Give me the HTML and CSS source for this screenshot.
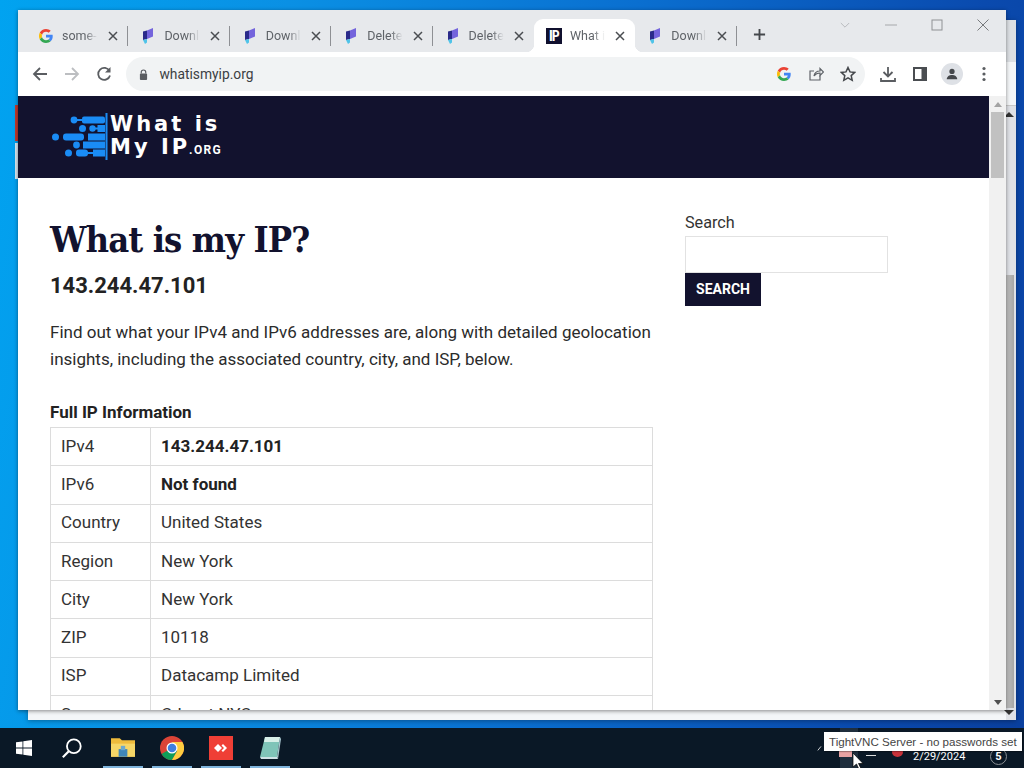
FILE: index.html
```html
<!DOCTYPE html>
<html lang="en">
<head>
<meta charset="utf-8">
<title>What is my IP?</title>
<link rel="stylesheet" href="styles.css">
</head>
<body>
<svg class="defs" width="0" height="0" aria-hidden="true">
  <defs>
    <symbol id="ic-g" viewBox="0 0 48 48">
      <path fill="#ea4335" d="M24 9.500c3.500 0 6.700 1.200 9.200 3.600l6.900-6.900C35.900 2.400 30.500 0 24 0 14.600 0 6.500 5.400 2.600 13.200l8 6.200C12.400 13.700 17.700 9.500 24 9.500z"/>
      <path fill="#4285f4" d="M47 24.500c0-1.600-.1-3.100-.4-4.500H24v9h13c-.6 3-2.300 5.500-4.800 7.200l7.700 6C44.400 37.900 47 31.800 47 24.500z"/>
      <path fill="#fbbc05" d="M10.500 28.600c-.5-1.400-.8-3-.8-4.600s.3-3.200.8-4.600l-8-6.200C.9 16.500 0 20.100 0 24s.9 7.500 2.600 10.800l7.900-6.200z"/>
      <path fill="#34a853" d="M24 48c6.500 0 11.900-2.100 15.900-5.800l-7.700-6c-2.200 1.400-4.900 2.300-8.200 2.300-6.300 0-11.600-4.200-13.500-9.900l-8 6.200C6.500 42.600 14.600 48 24 48z"/>
    </symbol>
    <symbol id="ic-doc" viewBox="0 0 12 16">
      <path fill="#7464dc" d="M5 2.500 11 0v8.500L5 11z"/>
      <path fill="#2a2a8a" d="M1 3.500 5 2.500V11l-4 1z"/>
      <path fill="#4fc3e8" d="M1 12l4-1v3.500L3 16z"/>
    </symbol>
    <symbol id="ic-x" viewBox="0 0 10 10">
      <path d="M1 1l8 8M9 1l-8 8" fill="none" stroke="#4a4d51" stroke-width="1.500"/>
    </symbol>
  </defs>
</svg>

<div class="desktop">
  <div class="peek"></div>
  <div class="back-window">
    <div class="back-strip"></div>
    <div class="back-bar"><span class="back-up"></span><span class="back-thumb"></span><span class="back-down"></span></div>
  </div>

  <div class="window">
    <div class="tabstrip">
      <div class="tab sep"><svg class="fav g"><use href="#ic-g"/></svg><span class="tab-title">some-s</span><svg class="tab-x"><use href="#ic-x"/></svg></div>
      <div class="tab sep"><svg class="fav doc"><use href="#ic-doc"/></svg><span class="tab-title">Downlo</span><svg class="tab-x"><use href="#ic-x"/></svg></div>
      <div class="tab sep"><svg class="fav doc"><use href="#ic-doc"/></svg><span class="tab-title">Downlo</span><svg class="tab-x"><use href="#ic-x"/></svg></div>
      <div class="tab sep"><svg class="fav doc"><use href="#ic-doc"/></svg><span class="tab-title">Delete</span><svg class="tab-x"><use href="#ic-x"/></svg></div>
      <div class="tab"><svg class="fav doc"><use href="#ic-doc"/></svg><span class="tab-title">Delete</span><svg class="tab-x"><use href="#ic-x"/></svg></div>
      <div class="tab active"><span class="fav ip">IP</span><span class="tab-title">What is</span><svg class="tab-x"><use href="#ic-x"/></svg></div>
      <div class="tab sep"><svg class="fav doc"><use href="#ic-doc"/></svg><span class="tab-title">Downlo</span><svg class="tab-x"><use href="#ic-x"/></svg></div>
      <svg class="new-tab" viewBox="0 0 14 14"><path d="M7 1v12M1 7h12" fill="none" stroke="#45484c" stroke-width="2"/></svg>
      <div class="win-ctrls">
        <svg class="ctrl chev" viewBox="0 0 12 8"><path d="M1 1l5 5 5-5" fill="none" stroke="#b9bbbe" stroke-width="1.200"/></svg>
        <svg class="ctrl" viewBox="0 0 12 12"><path d="M0 6h12" stroke="#a6a8ab" stroke-width="1"/></svg>
        <svg class="ctrl" viewBox="0 0 12 12"><rect x="1" y="1" width="10" height="10" fill="none" stroke="#8f9194" stroke-width="1"/></svg>
        <svg class="ctrl" viewBox="0 0 12 12"><path d="M.5.5l11 11M11.500.5l-11 11" fill="none" stroke="#77797c" stroke-width="1"/></svg>
      </div>
    </div>

    <div class="toolbar">
      <svg class="tool back" viewBox="0 0 16 16"><path d="M15 8H2M8 2 2 8l6 6" fill="none" stroke="#5a5d61" stroke-width="1.800"/></svg>
      <svg class="tool forward" viewBox="0 0 16 16"><path d="M1 8h13M8 2l6 6-6 6" fill="none" stroke="#bcbec1" stroke-width="1.800"/></svg>
      <svg class="tool reload" viewBox="0 0 16 16"><path d="M13.500 5A6 6 0 1 0 14 9.500" fill="none" stroke="#5a5d61" stroke-width="1.800"/><path d="M14.500 1v5.500H9z" fill="#5a5d61"/></svg>
      <div class="omnibox">
        <svg class="lock" viewBox="0 0 10 12"><path d="M2.500 5V3.500a2.500 2.500 0 0 1 5 0V5" fill="none" stroke="#5a5d61" stroke-width="1.300"/><rect x="1" y="5" width="8" height="7" rx="1" fill="#5a5d61"/></svg>
        <span class="url">whatismyip.org</span>
        <span class="omni-icons">
          <svg class="omni-g"><use href="#ic-g"/></svg>
          <svg class="omni-ic" viewBox="0 0 16 16"><path d="M12 9.500V14H2V5h4" fill="none" stroke="#5f6368" stroke-width="1.200"/><path d="M6 10c.5-3 3-5 6-5V2.500L15.500 6 12 9.500V7c-2.500 0-4.500 1-6 3z" fill="none" stroke="#5f6368" stroke-width="1.200"/></svg>
          <svg class="omni-ic" viewBox="0 0 16 16"><path d="M8 1.500l2 4.400 4.800.5-3.600 3.200 1 4.700L8 11.900l-4.200 2.400 1-4.700L1.200 6.400 6 5.900z" fill="none" stroke="#45484c" stroke-width="1.500"/></svg>
        </span>
      </div>
      <svg class="tool dl" viewBox="0 0 16 16"><path d="M8 1v9M3.500 6 8 10.500 12.500 6" fill="none" stroke="#5a5d61" stroke-width="1.800"/><path d="M1 12v3h14v-3" fill="none" stroke="#5a5d61" stroke-width="1.800"/></svg>
      <svg class="tool panel" viewBox="0 0 14 14"><path d="M0 0h14v14H0z" fill="#4a4d51"/><path d="M2 2h6.500v10H2z" fill="#fff"/></svg>
      <span class="avatar"><svg viewBox="0 0 16 16"><circle cx="8" cy="5" r="3" fill="#45484c"/><path d="M2 14c0-3.500 3-5 6-5s6 1.500 6 5z" fill="#45484c"/></svg></span>
      <svg class="tool kebab" viewBox="0 0 4 16"><circle cx="2" cy="2.500" r="1.600" fill="#5a5d61"/><circle cx="2" cy="8" r="1.600" fill="#5a5d61"/><circle cx="2" cy="13.500" r="1.600" fill="#5a5d61"/></svg>
    </div>

    <div class="viewport">
      <div class="page">
        <header class="site-head">
          <div class="logo">
            <svg class="logo-mark" viewBox="0 0 56 47">
              <g fill="#1a8cf5">
                <rect x="53.500" y="0" width="2" height="47"/>
                <circle cx="22" cy="7" r="3.400"/><rect x="24" y="6" width="6" height="2"/><rect x="30" y="3.500" width="23" height="7" rx="2"/>
                <circle cx="30.500" cy="15.500" r="3.500"/><circle cx="40.500" cy="15.500" r="3.200"/><rect x="43" y="14.500" width="3" height="2"/><rect x="45.500" y="12" width="7.500" height="7"/>
                <circle cx="3.500" cy="24" r="3.500"/><rect x="11" y="20.500" width="21" height="7" rx="3"/><rect x="36" y="20.500" width="17" height="7"/>
                <circle cx="24.500" cy="32" r="3.400"/><rect x="31" y="28.500" width="22" height="7"/>
                <circle cx="16.500" cy="40" r="3.500"/><rect x="24" y="36.500" width="12" height="7" rx="3"/><rect x="36" y="39" width="5" height="2"/><rect x="41" y="36.500" width="12" height="7"/>
              </g>
            </svg>
            <div class="logo-text">
              <span class="logo-line">What is</span>
              <span class="logo-line">My IP<small class="logo-org">.ORG</small></span>
            </div>
          </div>
        </header>
        <div class="page-body">
          <main class="main-col">
            <h1 class="title">What is my IP?</h1>
            <h2 class="ip-addr">143.244.47.101</h2>
            <p class="intro">Find out what your IPv4 and IPv6 addresses are, along with detailed geolocation insights, including the associated country, city, and ISP, below.</p>
            <h3 class="table-title">Full IP Information</h3>
            <table class="info">
              <tr><td class="key">IPv4</td><td><strong>143.244.47.101</strong></td></tr>
              <tr><td class="key">IPv6</td><td><strong>Not found</strong></td></tr>
              <tr><td class="key">Country</td><td>United States</td></tr>
              <tr><td class="key">Region</td><td>New York</td></tr>
              <tr><td class="key">City</td><td>New York</td></tr>
              <tr><td class="key">ZIP</td><td>10118</td></tr>
              <tr><td class="key">ISP</td><td>Datacamp Limited</td></tr>
              <tr><td class="key">Server</td><td>Cdnext NYC</td></tr>
            </table>
          </main>
          <aside class="side-col">
            <label class="search-label" for="q">Search</label>
            <input class="search-input" id="q" type="text">
            <button class="search-btn" type="button">SEARCH</button>
          </aside>
        </div>
      </div>
      <div class="scrollbar">
        <span class="sb-up"></span>
        <span class="sb-thumb"></span>
        <span class="sb-space"></span>
        <span class="sb-down"></span>
      </div>
    </div>
  </div>

  <div class="taskbar">
    <svg class="tb-start" viewBox="0 0 16 16"><path fill="#fff" d="M0 2.300 6.500 1.400v6.200H0zM7.300 1.300 16 0v7.600H7.300zM0 8.400h6.500v6.200L0 13.700zM7.300 8.400H16V16l-8.700-1.300z"/></svg>
    <svg class="tb-search" viewBox="0 0 24 24"><circle cx="14" cy="10" r="7.500" fill="none" stroke="#fff" stroke-width="2"/><path d="M8.500 15.500 2 22" stroke="#fff" stroke-width="2.400"/></svg>
    <span class="tb-app">
      <svg viewBox="0 0 22 20"><path d="M0 1h8l2 2h12v15H0z" fill="#eebb3c"/><path d="M0 6h22v12H0z" fill="#f6d667"/><path d="M7 11h8v7H7z" fill="#3f86b8"/><path d="M9 8h4v4H9z" fill="#6ba8cf"/></svg>
    </span>
    <span class="tb-app">
      <svg viewBox="0 0 24 24"><circle cx="12" cy="12" r="12" fill="#db4437"/><path d="M12 12 1.600 18A12 12 0 0 0 12 24l5.200-9z" fill="#0f9d58"/><path d="M12 6h10.400A12 12 0 0 1 12 24l5.200-9z" fill="#ffcd40"/><circle cx="12" cy="12" r="5.500" fill="#fff"/><circle cx="12" cy="12" r="4.300" fill="#3f7fe0"/></svg>
    </span>
    <span class="tb-app">
      <svg viewBox="0 0 24 24"><rect width="24" height="24" fill="#ef3f36"/><path d="M9 8l4 4-4 4-4-4z" fill="#fff"/><path d="M14 8l4 4-4 4-1.500-1.500 2.500-2.500-2.500-2.500z" fill="#fff"/></svg>
    </span>
    <span class="tb-app">
      <svg viewBox="0 0 22 24"><path d="M6 1h15l-3 20H1z" fill="#7fc4b8"/><path d="M6 1h15l-1 5H5z" fill="#d8efe8"/><path d="M1 21l17 0 1 2H2z" fill="#cfe2e6"/><path d="M18 21l3-20 1 2-3 20z" fill="#a9c6cf"/></svg>
    </span>
    <div class="tray">
      <svg class="tray-chev" viewBox="0 0 10 6"><path d="M1 6l4-5" fill="none" stroke="#fff" stroke-width="1"/></svg>
      <span class="tray-hover"></span>
      <span class="tray-red"></span>
      <span class="tray-net"></span>
      <span class="tray-x"></span>
      <span class="tray-date">2/29/2024</span>
      <span class="tray-note">5</span>
    </div>
  </div>

  <div class="tooltip">TightVNC Server - no passwords set</div>
  <svg class="cursor" viewBox="0 0 12 18"><path d="M1 1v14l3.500-3 2.500 5.500 2-1-2.500-5H11z" fill="#fff" stroke="#000" stroke-width=".7"/></svg>
</div>
</body>
</html>
```
FILE: styles.css
```css
* { box-sizing: border-box; }
html, body { margin: 0; height: 100%; overflow: hidden; }
body { font-family: Roboto, "Liberation Sans", sans-serif; }
.defs { position: absolute; }

.desktop {
  position: relative;
  width: 1024px;
  height: 768px;
  overflow: hidden;
  background: linear-gradient(100deg, #01a3f0 0%, #0a90e4 25%, #0a6fd0 55%, #0a4aae 85%, #0a3f9e 100%);
}

.peek { position: absolute; left: 15px; top: 105px; width: 3px; height: 36px; background: #c0392b; box-shadow: 0 38px 0 0 #d7e6ef; }

.back-window {
  position: absolute;
  left: 28px; top: 20px;
  width: 988px; height: 700px;
  background: #f4f6f8;
  box-shadow: 0 1px 5px rgba(0,0,0,.35);
  display: flex;
  justify-content: flex-end;
}
.back-strip { position: absolute; left: 0; right: 0; top: 0; height: 42px; background: #dcdfe3; }
.back-bar { position: relative; width: 10px; display: flex; flex-direction: column; margin-top: 85px; background: #dfe1e6; border-top: 1px solid #c8c8c8; }
.back-up { flex: none; width: 0; height: 0; margin: 6px 0 0 -2px; border-left: 5px solid transparent; border-right: 5px solid transparent; border-bottom: 5px solid #333; }
.back-thumb { flex: 1; margin-top: 158px; margin-right: 2px; background: linear-gradient(90deg, #c2c2c2, #a6a6a6); }
.back-down { flex: none; width: 0; height: 0; margin: 2px 0 5px -2px; border-left: 5px solid transparent; border-right: 5px solid transparent; border-top: 5px solid #333; }

.window {
  position: absolute;
  left: 18px; top: 10px;
  width: 988px; height: 700px;
  background: #fff;
  box-shadow: 0 1px 4px rgba(0,0,0,.45);
  display: flex;
  flex-direction: column;
}

.tabstrip {
  height: 42px;
  flex: none;
  background: #e7e9ec;
  display: flex;
  align-items: flex-end;
  padding-left: 9px;
  position: relative;
}
.tab {
  width: 101.400px;
  height: 33px;
  flex: none;
  display: flex;
  align-items: center;
  padding: 0 8px 0 10px;
  position: relative;
  font-size: 12.500px;
  color: #5f6368;
}
.tab.sep::after { content: ""; position: absolute; right: 0; top: 7px; height: 20px; width: 1px; background: #8e9094; }
.tab.active { background: #fff; border-radius: 9px 9px 0 0; }
.tab.active::before,
.tab.active::after { content: ""; position: absolute; bottom: 0; width: 8px; height: 8px; }
.tab.active::before { left: -8px; background: radial-gradient(circle at 0 0, transparent 8px, #fff 8.500px); }
.tab.active::after { right: -8px; background: radial-gradient(circle at 100% 0, transparent 8px, #fff 8.500px); }
.fav { width: 16px; height: 16px; flex: none; }
.fav.g { width: 14px; height: 14px; margin: 0 1px 0 2px; }
.fav.doc { width: 12px; height: 16px; margin: 0 2px 0 4px; }
.fav.ip { margin-left: 2px; background: #10102e; color: #fff; font: 700 14px/16px "Roboto Condensed", Roboto, sans-serif; text-align: center; letter-spacing: -.8px; }
.tab-title {
  flex: 1;
  min-width: 0;
  margin-left: 8px;
  white-space: nowrap;
  overflow: hidden;
  -webkit-mask-image: linear-gradient(90deg, #000 55%, transparent 85%);
  mask-image: linear-gradient(90deg, #000 55%, transparent 85%);
}
.tab-x { width: 10px; height: 10px; flex: none; margin-left: 4px; margin-right: 2px; }
.new-tab { width: 13px; height: 13px; margin: 0 0 11px 16px; flex: none; }

.win-ctrls { position: absolute; right: 0; top: 0; height: 30px; display: flex; }
.ctrl { width: 12px; height: 12px; margin: 9px 17px 0; flex: none; }
.ctrl.chev { width: 10px; height: 7px; margin: 12px 18px 0; }

.toolbar {
  height: 44px;
  flex: none;
  display: flex;
  align-items: center;
  background: #fff;
  padding-left: 14px;
  position: relative;
}
.tool { flex: none; width: 16px; height: 16px; }
.forward { margin-left: 16px; }
.reload { margin-left: 16px; }
.omnibox {
  width: 739px; height: 34px;
  margin-left: 14px;
  background: #f1f3f4;
  border-radius: 17px;
  display: flex;
  align-items: center;
  padding: 0 9px 0 13px;
  flex: none;
}
.lock { width: 9px; height: 11px; flex: none; }
.url { margin-left: 11.500px; font-size: 13.800px; color: #3c4043; }
.omni-icons { margin-left: auto; display: flex; align-items: center; gap: 16px; }
.omni-g { width: 14px; height: 14px; margin-right: 1px; }
.omni-ic { width: 16px; height: 16px; }
.dl { margin-left: 15px; }
.panel { width: 14px; height: 14px; margin-left: 17px; }
.avatar { width: 22px; height: 22px; border-radius: 50%; background: #dee1e6; margin-left: 14px; display: flex; align-items: center; justify-content: center; flex: none; }
.avatar svg { width: 14px; height: 14px; }
.kebab { width: 4px; margin-left: 19px; }

.viewport { flex: 1; min-height: 0; display: flex; overflow: hidden; }
.page { flex: 1; min-width: 0; overflow: hidden; background: #fff; }
.site-head { height: 82px; background: #12122e; padding: 17px 0 0 34px; }
.logo { display: flex; align-items: flex-start; }
.logo-mark { width: 56px; height: 47px; flex: none; }
.logo-text { display: flex; flex-direction: column; margin: 0 0 0 2px; }
.logo-line { font: 700 21px/23px "DejaVu Sans", "Liberation Sans", sans-serif; color: #fff; letter-spacing: 3px; white-space: nowrap; }
.logo-org { font: 700 12px/11px Roboto, sans-serif; letter-spacing: 1.300px; margin-left: -1px; }

.page-body { display: flex; padding: 35px 0 0 32px; }
.main-col { width: 603px; flex: none; }
.title { margin: 1px 0 0; font: 700 36px/50px "DejaVu Serif", "Liberation Serif", serif; font-stretch: condensed; letter-spacing: -.9px; color: #12122e; }
.ip-addr { margin: 6px 0 0; font: 700 22px/32px Roboto, sans-serif; color: #222; }
.intro { margin: 17px 0 0; font-size: 17px; line-height: 27px; color: #2b2b2b; }
.table-title { margin: 27px 0 0; font: 700 17px/24px Roboto, sans-serif; color: #222; }
.info { margin-top: 3px; width: 603px; border-collapse: collapse; font-size: 17px; color: #333; }
.info td { border: 1px solid #dcdcdc; height: 38.300px; padding: 0 10px 2px; line-height: 24px; }
.info .key { width: 100px; }
.info strong { color: #222; }

.side-col { margin-left: 32px; display: flex; flex-direction: column; align-items: flex-start; }
.search-label { font-size: 16.200px; line-height: 20px; color: #333; }
.search-input { width: 203px; height: 37px; margin-top: 3px; border: 1px solid #e2e2e2; background: #fff; outline: none; }
.search-btn { width: 76px; height: 33px; border: 0; background: #12122e; color: #fff; font: 700 14px/32px Roboto, sans-serif; padding: 0 0 1px; }

.scrollbar { width: 17px; flex: none; background: #f1f1f1; display: flex; flex-direction: column; align-items: center; position: relative; }
.sb-up { flex: none; width: 0; height: 0; margin: 6px 0 5px; border-left: 4px solid transparent; border-right: 4px solid transparent; border-bottom: 5px solid #a3a3a3; }
.sb-thumb { flex: none; width: 13px; height: 66px; background: #c1c1c1; }
.sb-space { flex: 1; }
.sb-down { flex: none; width: 0; height: 0; margin-bottom: 5px; border-left: 4px solid transparent; border-right: 4px solid transparent; border-top: 5px solid #505050; }

.taskbar {
  position: absolute;
  left: 0; right: 0; bottom: 0;
  height: 40px;
  background: #0a1826;
  display: flex;
  align-items: center;
  padding-left: 16px;
}
.tb-start { width: 16px; height: 16px; flex: none; }
.tb-search { width: 22px; height: 22px; flex: none; margin-left: 29px; }
.tb-app { width: 49px; height: 40px; flex: none; display: flex; align-items: center; justify-content: center; position: relative; }
.tb-app svg { width: 24px; height: 24px; }
.tb-search + .tb-app { margin-left: 15.500px; }
.tb-app::after { content: ""; position: absolute; left: 4.500px; right: 4.500px; bottom: 0; height: 2px; background: #7fb4dc; }
.tray { margin-left: auto; display: flex; align-items: center; color: #fff; height: 40px; position: relative; width: 208px; }
.tray-chev { position: absolute; left: 1px; top: 17px; width: 8px; height: 6px; }
.tray-hover { position: absolute; left: 24px; top: 0; width: 18px; height: 40px; background: #1f2e3d; }
.tray-red { position: absolute; left: 23px; top: 21px; width: 13px; height: 8px; background: #e9a3a3; }
.tray-net { position: absolute; left: 50px; top: 20px; width: 10px; height: 8px; border-bottom: 1px solid #ddd; }
.tray-x { position: absolute; left: 76px; top: 19px; width: 11px; height: 10px; border-radius: 50%; background: #c8323a; }
.tray-date { position: absolute; left: 97px; top: 21px; font-size: 11px; line-height: 16px; }
.tray-note { position: absolute; left: 174px; top: 20px; width: 17px; height: 17px; border-radius: 50%; border: 1px solid #8a8f94; font-size: 11px; font-weight: 700; line-height: 15px; text-align: center; }

.tooltip {
  position: absolute;
  left: 824px; top: 732px;
  width: 198px; height: 19px;
  background: #fff;
  box-shadow: 1px 1px 1px rgba(0,0,0,.3);
  font: 11.600px/19px "Liberation Sans", Arial, sans-serif;
  color: #444;
  padding-left: 5px;
  white-space: nowrap;
}
.cursor { position: absolute; left: 852px; top: 752px; width: 12px; height: 18px; }
```
